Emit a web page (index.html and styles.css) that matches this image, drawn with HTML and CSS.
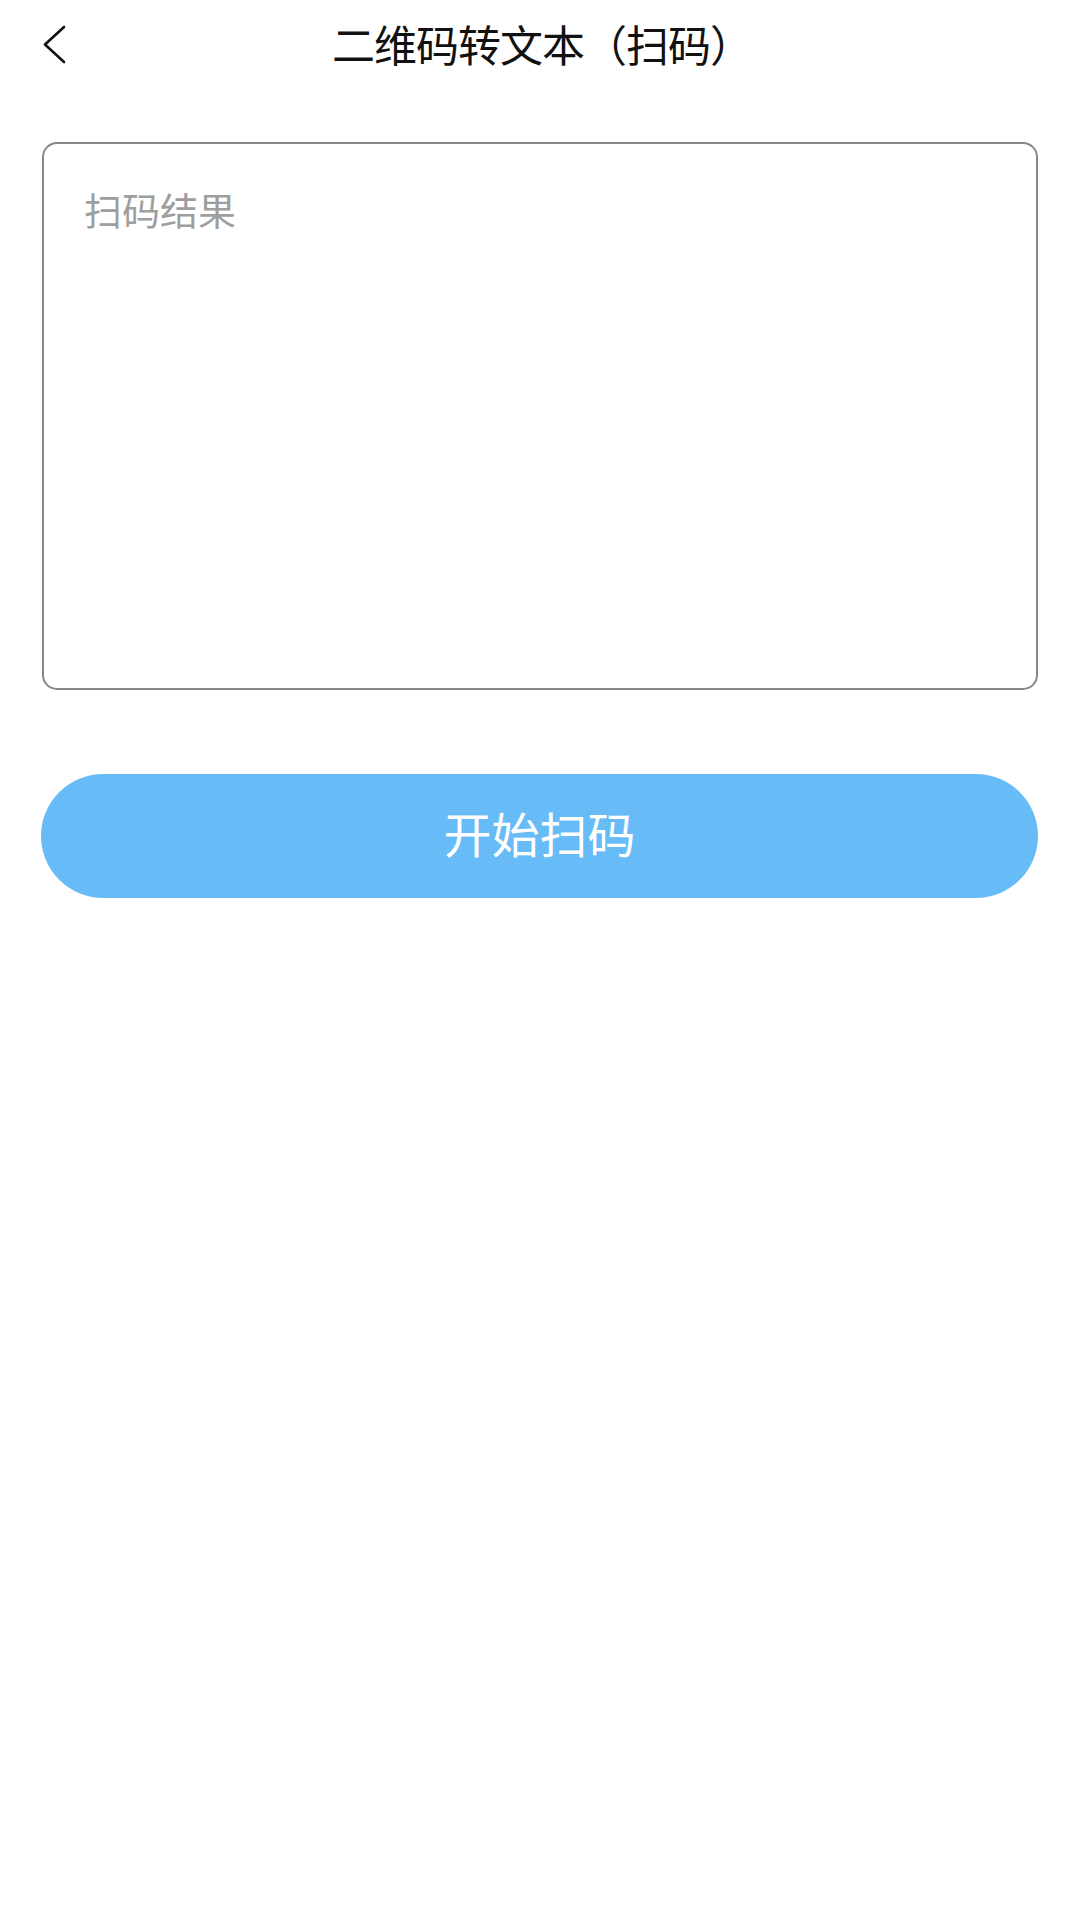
FILE: index.html
```html
<!DOCTYPE html>
<html lang="zh-CN">

<head>
    <meta charset="UTF-8">
    <meta name="viewport" content="width=device-width, initial-scale=1.0">
    <title>二维码转文本（扫码）</title>
    <link rel="stylesheet" href="styles.css">
</head>

<body>

    <div class="header">
        <a class="back" href="#">
            <svg width="30" height="40" viewBox="0 0 30 40">
                <polyline points="22,2 3,19.5 22,37" fill="none" stroke="#111" stroke-width="2.6" stroke-linecap="round" stroke-linejoin="round"/>
            </svg>
        </a>
        <h1 class="title">二维码转文本（扫码）</h1>
    </div>

    <div class="main">
        <textarea class="result" placeholder="扫码结果"></textarea>
        <button class="scan-btn">开始扫码</button>
    </div>

</body>

</html>
```

FILE: styles.css
```css
body {
    margin: 0;
    background-color: #fff;
    font-family: "Noto Sans CJK SC", "Noto Sans", sans-serif;
}

.header {
    position: relative;
    height: 86px;
    display: flex;
    align-items: center;
    justify-content: center;
}

.back {
    position: absolute;
    left: 42px;
    top: 25px;
    display: block;
    width: 30px;
    height: 40px;
}

.title {
    margin: 0;
    font-size: 43px;
    font-weight: normal;
    color: #111;
    letter-spacing: -1px;
    padding-left: 4px;
}

.main {
    padding: 56px 42px 0 41px;
    display: flex;
    flex-direction: column;
}

.result {
    box-sizing: border-box;
    height: 548px;
    margin-left: 1px;
    padding: 42px 40px;
    border: 2.5px solid #888;
    border-radius: 15px;
    font-family: inherit;
    font-size: 38px;
    line-height: 1.2;
    color: #333;
    resize: none;
    outline: none;
}

.result::placeholder {
    color: #9e9e9e;
}

.scan-btn {
    margin-top: 84px;
    height: 124px;
    border: none;
    border-radius: 62px;
    background-color: #67bcf7;
    color: #fff;
    font-family: inherit;
    font-size: 48px;
    padding: 0 0 8px;
}
```
